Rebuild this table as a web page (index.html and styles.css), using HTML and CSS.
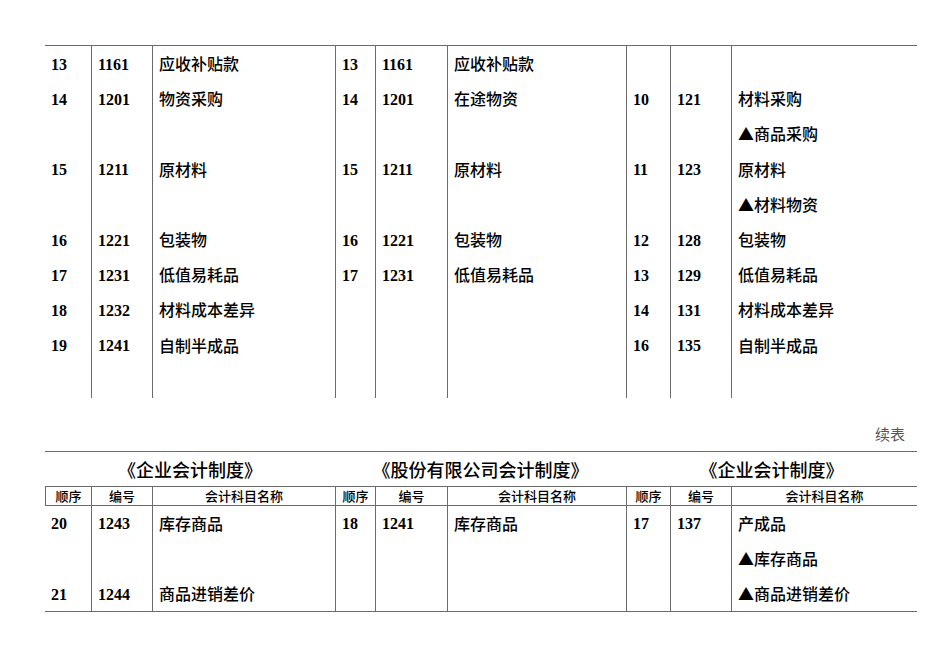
FILE: index.html
```html
<!DOCTYPE html>
<html lang="zh-CN">
<head>
<meta charset="utf-8">
<title>会计科目对照表</title>
<link rel="stylesheet" href="styles.css">
</head>
<body>
<div class="page">
  <div class="grid body1">
    <div class="c c0 n">13</div><div class="c n">1161</div><div class="c t">应收补贴款</div><div class="c n">13</div><div class="c n">1161</div><div class="c t">应收补贴款</div><div class="c n"></div><div class="c n"></div><div class="c t"></div>
    <div class="c c0 n">14</div><div class="c n">1201</div><div class="c t">物资采购</div><div class="c n">14</div><div class="c n">1201</div><div class="c t">在途物资</div><div class="c n">10</div><div class="c n">121</div><div class="c t">材料采购</div>
    <div class="c c0 n"></div><div class="c n"></div><div class="c t"></div><div class="c n"></div><div class="c n"></div><div class="c t"></div><div class="c n"></div><div class="c n"></div><div class="c t">▲商品采购</div>
    <div class="c c0 n">15</div><div class="c n">1211</div><div class="c t">原材料</div><div class="c n">15</div><div class="c n">1211</div><div class="c t">原材料</div><div class="c n">11</div><div class="c n">123</div><div class="c t">原材料</div>
    <div class="c c0 n"></div><div class="c n"></div><div class="c t"></div><div class="c n"></div><div class="c n"></div><div class="c t"></div><div class="c n"></div><div class="c n"></div><div class="c t">▲材料物资</div>
    <div class="c c0 n">16</div><div class="c n">1221</div><div class="c t">包装物</div><div class="c n">16</div><div class="c n">1221</div><div class="c t">包装物</div><div class="c n">12</div><div class="c n">128</div><div class="c t">包装物</div>
    <div class="c c0 n">17</div><div class="c n">1231</div><div class="c t">低值易耗品</div><div class="c n">17</div><div class="c n">1231</div><div class="c t">低值易耗品</div><div class="c n">13</div><div class="c n">129</div><div class="c t">低值易耗品</div>
    <div class="c c0 n">18</div><div class="c n">1232</div><div class="c t">材料成本差异</div><div class="c n"></div><div class="c n"></div><div class="c t"></div><div class="c n">14</div><div class="c n">131</div><div class="c t">材料成本差异</div>
    <div class="c c0 n">19</div><div class="c n">1241</div><div class="c t">自制半成品</div><div class="c n"></div><div class="c n"></div><div class="c t"></div><div class="c n">16</div><div class="c n">135</div><div class="c t">自制半成品</div>
    <div class="c c0 n"></div><div class="c n"></div><div class="c t"></div><div class="c n"></div><div class="c n"></div><div class="c t"></div><div class="c n"></div><div class="c n"></div><div class="c t"></div>
  </div>

  <div class="note">续表</div>

  <div class="table2">
    <div class="titles">
      <div class="ti ti1">《企业会计制度》</div>
      <div class="ti ti2">《股份有限公司会计制度》</div>
      <div class="ti ti3">《企业会计制度》</div>
    </div>
    <div class="grid head">
      <div class="h c0">顺序</div><div class="h">编号</div><div class="h">会计科目名称</div>
      <div class="h">顺序</div><div class="h">编号</div><div class="h">会计科目名称</div>
      <div class="h">顺序</div><div class="h">编号</div><div class="h">会计科目名称</div>
    </div>
    <div class="grid body2">
      <div class="c c0 n">20</div><div class="c n">1243</div><div class="c t">库存商品</div><div class="c n">18</div><div class="c n">1241</div><div class="c t">库存商品</div><div class="c n">17</div><div class="c n">137</div><div class="c t">产成品</div>
      <div class="c c0 n"></div><div class="c n"></div><div class="c t"></div><div class="c n"></div><div class="c n"></div><div class="c t"></div><div class="c n"></div><div class="c n"></div><div class="c t">▲库存商品</div>
      <div class="c c0 n">21</div><div class="c n">1244</div><div class="c t">商品进销差价</div><div class="c n"></div><div class="c n"></div><div class="c t"></div><div class="c n"></div><div class="c n"></div><div class="c t">▲商品进销差价</div>
    </div>
  </div>
</div>
</body>
</html>
```

FILE: styles.css
```css
html, body {
  margin: 0;
  padding: 0;
  background: #ffffff;
}

.page {
  padding: 45px 0 0 45px;
  width: 872px;
  color: #000;
  font-family: "Liberation Serif", "Noto Sans CJK SC", serif;
}

.grid {
  display: grid;
  grid-template-columns: 46px 61px 183px 40px 72px 179px 44px 61px 186px;
  width: 872px;
}

.body1 {
  border-top: 1px solid #6a6a6a;
  grid-auto-rows: 35.2px;
}

.c {
  box-sizing: border-box;
  border-left: 1px solid #6a6a6a;
  padding-left: 6px;
  display: flex;
  align-items: center;
  font-size: 16px;
  white-space: nowrap;
}

.c0 {
  border-left: none;
}

.n {
  font-family: "Liberation Serif", serif;
  font-weight: bold;
  padding-top: 2px;
}

.t {
  font-family: "Noto Sans CJK SC", sans-serif;
  font-weight: 500;
  padding-bottom: 1px;
}

.note {
  margin-top: 26px;
  height: 20px;
  line-height: 20px;
  margin-bottom: 7px;
  text-align: right;
  padding-right: 12px;
  font-family: "Noto Sans CJK SC", sans-serif;
  font-size: 15px;
  color: #555;
}

.table2 {
  border-top: 1px solid #6a6a6a;
  border-bottom: 1px solid #6a6a6a;
  width: 872px;
}

.titles {
  display: flex;
  height: 34px;
  align-items: center;
}

.ti {
  text-align: center;
  font-family: "Noto Sans CJK SC", sans-serif;
  font-size: 18px;
  font-weight: 500;
}

.ti1 { width: 290px; }
.ti2 { width: 291px; }
.ti3 { width: 291px; }

.head {
  border-top: 1px solid #6a6a6a;
  border-bottom: 1px solid #6a6a6a;
  grid-auto-rows: 18px;
}

.h {
  box-sizing: border-box;
  border-left: 1px solid #6a6a6a;
  text-align: center;
  font-family: "Noto Sans CJK SC", sans-serif;
  font-size: 13px;
  font-weight: 500;
  line-height: 18px;
  white-space: nowrap;
}

.body2 {
  grid-auto-rows: 35.2px;
}
```
